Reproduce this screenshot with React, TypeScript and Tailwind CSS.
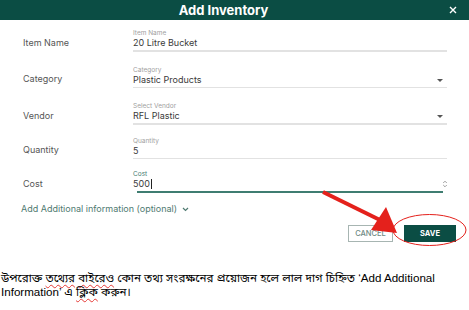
import React from "react";

type Row = {
  label: string;
  small: string;
  value: string;
  mt: string;
  select?: boolean;
  focused?: boolean;
};

const rows: Row[] = [
  { label: "Item Name", small: "Item Name", value: "20 Litre Bucket", mt: "mt-[9px]" },
  { label: "Category", small: "Category", value: "Plastic Products", mt: "mt-[14px]", select: true },
  { label: "Vendor", small: "Select Vendor", value: "RFL Plastic", mt: "mt-[14px]", select: true },
  { label: "Quantity", small: "Quantity", value: "5", mt: "mt-[12px]" },
  { label: "Cost", small: "Cost", value: "500", mt: "mt-[11px]", focused: true },
];

function Field({ r }: { r: Row }) {
  return (
    <div className={`flex items-end ${r.mt}`}>
      <div className="w-[133px] shrink-0 pl-[23px] mb-[3px] text-[9px] leading-[12px] text-[#555]">
        {r.label}
      </div>
      <div className="w-[314px] shrink-0">
        <div
          className={`h-[8px] text-[6.5px] leading-[8px] ${
            r.focused ? "text-[#3f7d71]" : "text-[#a0a0a0]"
          }`}
        >
          {r.small}
        </div>
        <div className="relative flex h-[12px] items-center text-[9px] leading-[12px] text-[#3a3a3a]">
          <span>{r.value}</span>
          {r.focused && <span className="ml-[1px] inline-block h-[10px] w-px bg-[#222]" />}
          {r.select && (
            <span className="absolute right-[4px] top-[5px] h-0 w-0 border-l-[3px] border-r-[3px] border-t-[3px] border-l-transparent border-r-transparent border-t-[#555]" />
          )}
          {r.focused && (
            <svg
              className="absolute right-[-1px] top-[2px]"
              width="6"
              height="8"
              viewBox="0 0 6 8"
              fill="none"
              stroke="#888"
              strokeWidth="0.8"
            >
              <path d="M1.2 3 L3 1.2 L4.8 3" />
              <path d="M1.2 5 L3 6.8 L4.8 5" />
            </svg>
          )}
        </div>
        {r.focused ? (
          <div className="mt-[1px] mx-[4px] h-[2px] bg-[#3f7d71]" />
        ) : (
          <div className="mt-[1px] h-[1.5px] bg-[#e2e2e2]" />
        )}
      </div>
    </div>
  );
}

export default function App() {
  return (
    <div
      className="relative h-[310px] w-[469px] overflow-hidden bg-white"
      style={{ fontFamily: "Inter, 'Open Sans', sans-serif" }}
    >
      <div className="relative flex h-[20px] items-center bg-[#0b4d44]">
        <div className="w-[447px] text-center text-[13px] font-bold leading-[20px] text-white">
          Add Inventory
        </div>
        <svg
          className="absolute left-[449px] top-[6px]"
          width="8"
          height="8"
          viewBox="0 0 8 8"
          stroke="white"
          strokeWidth="1.4"
        >
          <path d="M1 1 L7 7 M7 1 L1 7" />
        </svg>
      </div>

      {rows.map((r) => (
        <Field key={r.label} r={r} />
      ))}

      <div className="mt-[10px] flex items-center pl-[21px] text-[9px] leading-[12px] text-[#4f7a71]">
        <span>Add Additional information (optional)</span>
        <svg className="ml-[5px]" width="7" height="5" viewBox="0 0 7 5" fill="none" stroke="#4f7a71" strokeWidth="1.2">
          <path d="M1 1 L3.5 3.5 L6 1" />
        </svg>
      </div>

      <div className="mt-[10px] flex justify-end gap-[11px] pr-[13px]">
        <div className="flex h-[17px] w-[45px] items-center justify-center border border-[#a7b5b2] text-[7.5px] font-medium text-[#6e8a84]">
          CANCEL
        </div>
        <div className="flex h-[17px] w-[52px] items-center justify-center bg-[#0b4d44] text-[7.5px] font-bold text-white">
          SAVE
        </div>
      </div>

      <div
        className="mt-[29px] pl-[1px] text-[11.6px] leading-[14px] text-black"
        style={{ fontFamily: "'Liberation Sans', 'Noto Sans Bengali', 'Noto Sans', sans-serif" }}
      >
        উপরোক্ত{" "}
        <span className="underline decoration-wavy decoration-[#e53935] decoration-1 underline-offset-2">তথ্যের</span>{" "}
        <span className="underline decoration-wavy decoration-[#e53935] decoration-1 underline-offset-2">বাইরেও</span> কোন তথ্য
        সংরক্ষনের প্রয়োজন হলে লাল দাগ চিহ্নিত ‘Add Additional
        <br />
        Information’ এ{" "}
        <span className="underline decoration-wavy decoration-[#e53935] decoration-1 underline-offset-2">ক্লিক</span> করুন।
      </div>

      <svg className="pointer-events-none absolute left-0 top-0" width="469" height="310" viewBox="0 0 469 310">
        <line x1="323" y1="192" x2="382" y2="221" stroke="#e4211c" strokeWidth="4" />
        <polygon points="397,233 371,230 386,207" fill="#e4211c" />
        <ellipse cx="429.5" cy="230" rx="36.5" ry="15.5" fill="none" stroke="#e4211c" strokeWidth="1" />
      </svg>
    </div>
  );
}
